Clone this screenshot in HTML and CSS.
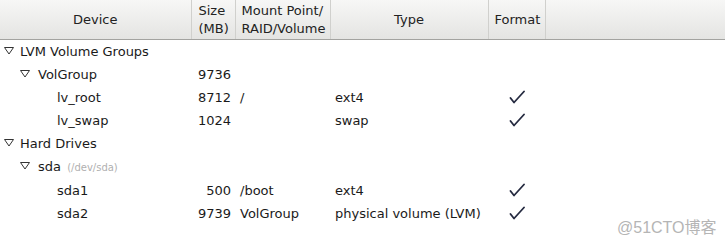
FILE: index.html
```html
<!DOCTYPE html>
<html lang="en">
<head>
    <meta charset="UTF-8">
    <title>Partitions</title>
    <link rel="stylesheet" href="styles.css">
</head>
<body>
    <table class="tree">
        <colgroup>
            <col style="width:191px">
            <col style="width:44px">
            <col style="width:95px">
            <col style="width:158px">
            <col style="width:57px">
            <col>
        </colgroup>
        <thead>
            <tr>
                <th class="center">Device</th>
                <th>Size<br>(MB)</th>
                <th>Mount Point/<br>RAID/Volume</th>
                <th class="center">Type</th>
                <th>Format</th>
                <th class="last"></th>
            </tr>
        </thead>
        <tbody>
            <tr>
                <td><span class="lvl0"><svg class="arrow" width="10" height="8" viewBox="0 0 10 8"><polygon points="0.5,0.5 9.5,0.5 5,7" /></svg>LVM Volume Groups</span></td>
                <td></td><td></td><td></td><td></td><td></td>
            </tr>
            <tr>
                <td><span class="lvl1"><svg class="arrow" width="10" height="8" viewBox="0 0 10 8"><polygon points="0.5,0.5 9.5,0.5 5,7" /></svg>VolGroup</span></td>
                <td class="num">9736</td><td></td><td></td><td></td><td></td>
            </tr>
            <tr>
                <td><span class="lvl2">lv_root</span></td>
                <td class="num">8712</td><td class="mount">/</td><td class="type">ext4</td>
                <td class="center"><svg class="check" width="16" height="14" viewBox="0 0 16 14"><path d="M1.5 8 L5 12.5 L15 1.5" /></svg></td><td></td>
            </tr>
            <tr>
                <td><span class="lvl2">lv_swap</span></td>
                <td class="num">1024</td><td class="mount"></td><td class="type">swap</td>
                <td class="center"><svg class="check" width="16" height="14" viewBox="0 0 16 14"><path d="M1.5 8 L5 12.5 L15 1.5" /></svg></td><td></td>
            </tr>
            <tr>
                <td><span class="lvl0"><svg class="arrow" width="10" height="8" viewBox="0 0 10 8"><polygon points="0.5,0.5 9.5,0.5 5,7" /></svg>Hard Drives</span></td>
                <td></td><td></td><td></td><td></td><td></td>
            </tr>
            <tr>
                <td><span class="lvl1"><svg class="arrow" width="10" height="8" viewBox="0 0 10 8"><polygon points="0.5,0.5 9.5,0.5 5,7" /></svg>sda <small class="dev">(/dev/sda)</small></span></td>
                <td></td><td></td><td></td><td></td><td></td>
            </tr>
            <tr>
                <td><span class="lvl2">sda1</span></td>
                <td class="num">500</td><td class="mount">/boot</td><td class="type">ext4</td>
                <td class="center"><svg class="check" width="16" height="14" viewBox="0 0 16 14"><path d="M1.5 8 L5 12.5 L15 1.5" /></svg></td><td></td>
            </tr>
            <tr>
                <td><span class="lvl2">sda2</span></td>
                <td class="num">9739</td><td class="mount">VolGroup</td><td class="type">physical volume (LVM)</td>
                <td class="center"><svg class="check" width="16" height="14" viewBox="0 0 16 14"><path d="M1.5 8 L5 12.5 L15 1.5" /></svg></td><td></td>
            </tr>
        </tbody>
    </table>

    <div class="mark">@51CTO博客</div>
</body>
</html>
```

FILE: styles.css
```css
body {
    margin: 0;
    background-color: #fff;
    font-family: 'DejaVu Sans', sans-serif;
    font-size: 13px;
    color: #1a1a1a;
    width: 725px;
    height: 243px;
    overflow: hidden;
}

.tree {
    width: 725px;
    border-collapse: collapse;
    table-layout: fixed;
}

.tree th {
    height: 39px;
    padding: 0 0 0 6px;
    font-weight: normal;
    text-align: left;
    line-height: 18px;
    color: #222;
    background: linear-gradient(#f7f7f6, #e4e4e2);
    border-bottom: 1px solid #a3a3a0;
    border-right: 1px solid #d0d0cd;
    background-clip: padding-box;
}

.tree th:nth-child(2) {
    padding-left: 7px;
}

.tree th.center {
    text-align: center;
    padding: 0;
}

.tree th.last {
    border-right: none;
}

.tree td {
    height: 23px;
    padding: 0;
    white-space: nowrap;
    line-height: 23px;
}

.tree td.num {
    text-align: right;
    padding-right: 4px;
}

.tree td.mount {
    padding-left: 5px;
}

.tree td.type {
    padding-left: 5px;
}

.tree td.center {
    text-align: center;
}

.lvl0 {
    padding-left: 4px;
}

.lvl1 {
    padding-left: 20px;
}

.lvl1 .arrow {
    margin-right: 8px;
}

.lvl2 {
    padding-left: 57px;
}

.arrow {
    margin-right: 6px;
    vertical-align: 1px;
}

.arrow polygon {
    fill: none;
    stroke: #333;
    stroke-width: 1;
}

.check {
    vertical-align: -2px;
}

.check path {
    fill: none;
    stroke: #252a40;
    stroke-width: 1.8;
    stroke-linecap: round;
    stroke-linejoin: round;
}

.dev {
    margin-left: 2px;
    font-size: 10px;
    color: #b0b0b0;
}

.mark {
    position: absolute;
    left: 617px;
    top: 214px;
    font-size: 16px;
    color: #b5b5b5;
    font-family: 'Liberation Sans', 'Noto Sans CJK SC', sans-serif;
}
```
